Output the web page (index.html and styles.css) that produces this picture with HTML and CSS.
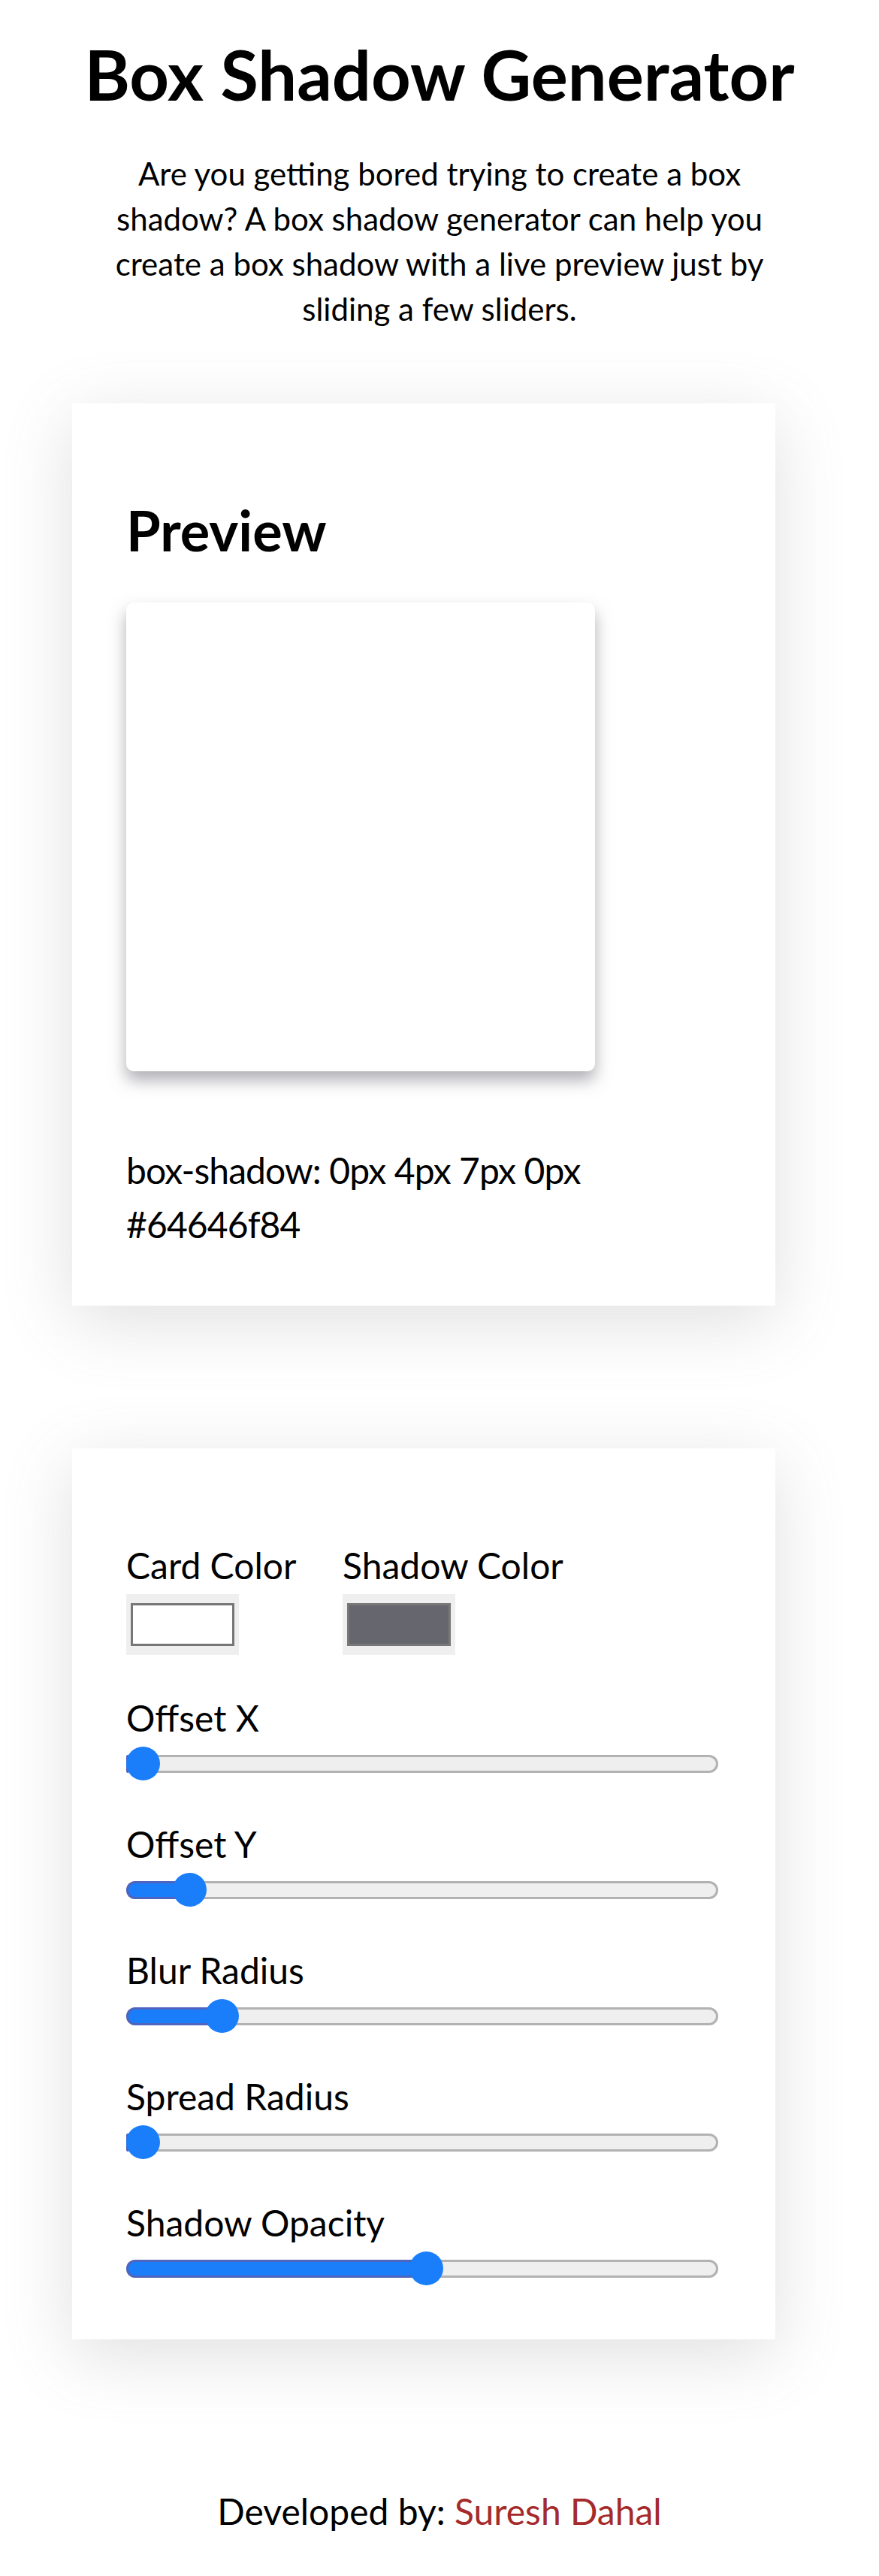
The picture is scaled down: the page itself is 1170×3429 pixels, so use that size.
FILE: index.html
```html
<!DOCTYPE html>
<html lang="en">
<head>
<meta charset="utf-8">
<title>Box Shadow Generator</title>
<link rel="stylesheet" href="styles.css">
</head>
<body>
<header class="intro">
  <h1 class="title">Box Shadow Generator</h1>
  <p class="lead">Are you getting bored trying to create a box shadow? A box shadow generator can help you create a box shadow with a live preview just by sliding a few sliders.</p>
</header>

<main class="main">
  <section class="card preview-card">
    <h2 class="card-title">Preview</h2>
    <div class="preview-box"></div>
    <p class="code">box-shadow: 0px 4px 7px 0px #64646f84</p>
  </section>

  <section class="card controls-card">
    <div class="colors">
      <label class="color-field">
        <span class="field-label">Card Color</span>
        <span class="swatch-outer"><span class="swatch swatch-white"></span></span>
      </label>
      <label class="color-field">
        <span class="field-label">Shadow Color</span>
        <span class="swatch-outer"><span class="swatch swatch-shadow"></span></span>
      </label>
    </div>

    <div class="range-field">
      <span class="field-label">Offset X</span>
      <div class="slider"><div class="track"><div class="fill" style="width:0px"></div></div><span class="thumb" style="left:0px"></span></div>
    </div>
    <div class="range-field">
      <span class="field-label">Offset Y</span>
      <div class="slider"><div class="track"><div class="fill" style="width:84px"></div></div><span class="thumb" style="left:62px"></span></div>
    </div>
    <div class="range-field">
      <span class="field-label">Blur Radius</span>
      <div class="slider"><div class="track"><div class="fill" style="width:127px"></div></div><span class="thumb" style="left:105px"></span></div>
    </div>
    <div class="range-field">
      <span class="field-label">Spread Radius</span>
      <div class="slider"><div class="track"><div class="fill" style="width:0px"></div></div><span class="thumb" style="left:0px"></span></div>
    </div>
    <div class="range-field">
      <span class="field-label">Shadow Opacity</span>
      <div class="slider"><div class="track"><div class="fill" style="width:399px"></div></div><span class="thumb" style="left:377px"></span></div>
    </div>
  </section>
</main>

<footer class="footer">Developed by: <span class="author">Suresh Dahal</span></footer>
</body>
</html>
```

FILE: styles.css
```css
* { box-sizing: border-box; }

body {
  margin: 0;
  background: #ffffff;
  color: #000000;
  font-family: Lato, "Open Sans", sans-serif;
}

.intro {
  display: flex;
  flex-direction: column;
  align-items: center;
  text-align: center;
}

.title {
  margin: 44px 0 0;
  font-size: 92px;
  line-height: 110px;
  font-weight: 700;
}

.lead {
  margin: 47px 0 0;
  width: 900px;
  font-size: 42px;
  line-height: 60px;
}

.main {
  display: flex;
  flex-direction: column;
  padding-left: 96px;
}

.card {
  width: 936px;
  background: #ffffff;
  padding: 72px;
  box-shadow: 0 21px 87px 0 rgba(100, 100, 111, 0.2);
}

.preview-card {
  margin-top: 96px;
}

.card-title {
  margin: 54px 0 0;
  font-size: 74px;
  line-height: 86px;
  font-weight: 700;
}

.preview-box {
  margin-top: 53px;
  width: 624px;
  height: 624px;
  background: #ffffff;
  border-radius: 10px;
  box-shadow: 0 12px 21px 0 #64646f84;
}

.code {
  margin: 96px 0 0;
  font-size: 48px;
  line-height: 72px;
  letter-spacing: -0.9px;
}

.controls-card {
  margin-top: 190px;
  padding-top: 128px;
}

.colors {
  display: grid;
  grid-template-columns: 228px auto;
  column-gap: 60px;
  justify-content: start;
}

.color-field {
  display: flex;
  flex-direction: column;
  align-items: flex-start;
  gap: 10px;
}

.field-label {
  display: block;
  font-size: 48px;
  line-height: 56px;
}

.swatch-outer {
  display: block;
  width: 150px;
  height: 81px;
  padding: 12px 6px;
  background: #efefef;
}

.swatch {
  display: block;
  width: 100%;
  height: 100%;
  border: 3px solid #777777;
}

.swatch-white { background: #ffffff; }
.swatch-shadow { background: #66666f; }

.range-field {
  display: flex;
  flex-direction: column;
  gap: 10px;
  margin-top: 56px;
}

.range-field + .range-field {
  margin-top: 57px;
}

.slider {
  position: relative;
  display: flex;
  align-items: center;
  width: 788px;
  height: 45px;
}

.track {
  flex: 1;
  height: 24px;
  border: 3px solid #b2b2b2;
  border-radius: 12px;
  background: #efefef;
}

.fill {
  height: 24px;
  margin: -3px;
  background: #1a7efb;
  border: 3px solid #4f64bf;
  border-right: 0;
  border-radius: 12px 0 0 12px;
}

.thumb {
  position: absolute;
  top: 0;
  width: 45px;
  height: 45px;
  border-radius: 50%;
  background: #1a7efb;
}

.footer {
  margin-top: 201px;
  text-align: center;
  font-size: 48px;
  line-height: 56px;
  padding-bottom: 40px;
}

.author {
  color: #a52a2a;
}
```
